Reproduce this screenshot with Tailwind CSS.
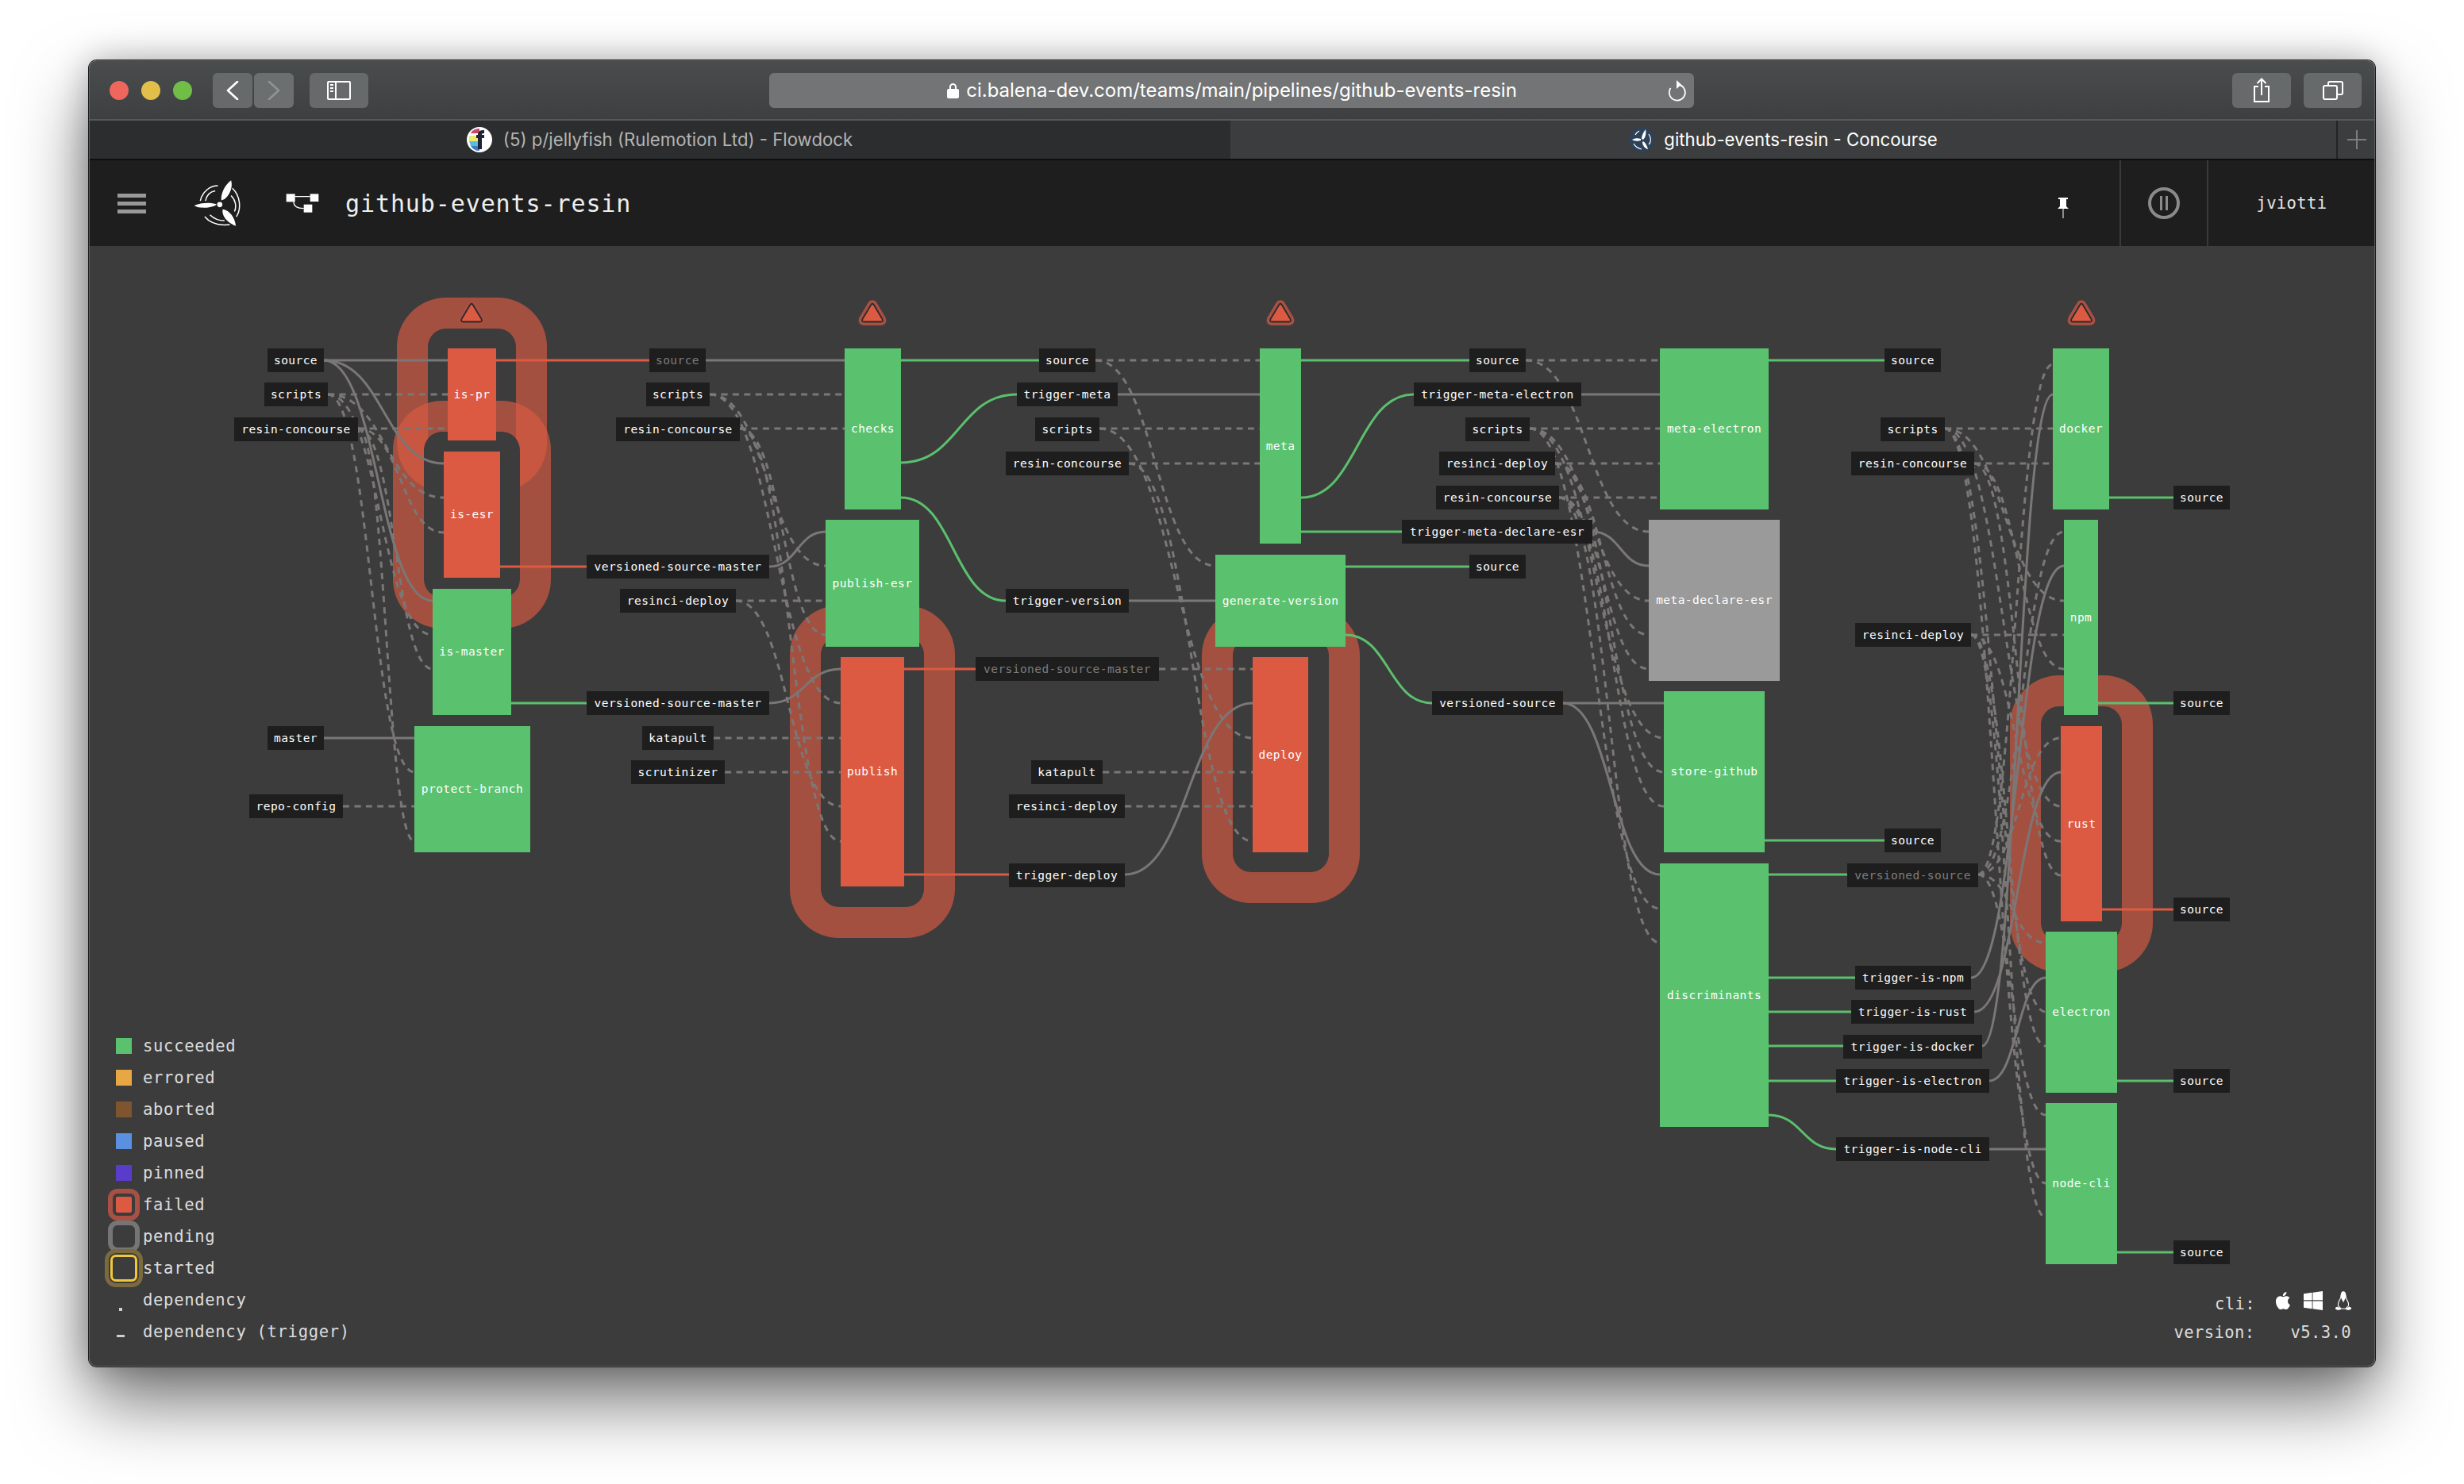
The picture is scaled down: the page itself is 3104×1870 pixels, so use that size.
<!DOCTYPE html>
<html lang="en">
<head>
    <meta charset="UTF-8">
    <title>github-events-resin - Concourse</title>
    <script src="https://cdn.jsdelivr.net/npm/@tailwindcss/browser@4"></script>
</head>
<body class="relative w-[3104px] h-[1870px] bg-white overflow-hidden">
    <!-- Browser window -->
    <div class="ml-[112px] mt-[76px] w-[2880px] h-[1646px] flex flex-col rounded-[10px] overflow-hidden shadow-[0_0_0_1px_#1c1c1c,0_44px_90px_rgba(0,0,0,0.55),0_0_40px_rgba(0,0,0,0.25)]">
        <!-- Toolbar -->
        <div class="h-[76px] shrink-0 flex items-start pt-[16px] pl-[26px] bg-gradient-to-b from-[#4a4d4e] to-[#3d3f40] border-b-2 border-[#565859]">
            <div class="flex gap-4 mt-[10px]">
                <div class="w-6 h-6 rounded-full bg-[#ee665c]"></div>
                <div class="w-6 h-6 rounded-full bg-[#e2bf4b]"></div>
                <div class="w-6 h-6 rounded-full bg-[#70be47]"></div>
            </div>
            <div class="ml-[26px] w-[50px] h-11 rounded-md bg-[#676a6b] flex items-center justify-center">
                <svg class="w-[16px] h-[24px]" viewBox="0 0 16 24" fill="none" stroke="#fff" stroke-width="2.6" stroke-linecap="round" stroke-linejoin="round"><path d="M14 1 2 12l12 11"/></svg>
            </div>
            <div class="ml-[2px] w-[50px] h-11 rounded-md bg-[#6c6f70] flex items-center justify-center">
                <svg class="w-[16px] h-[24px]" viewBox="0 0 16 24" fill="none" stroke="#909394" stroke-width="2.6" stroke-linecap="round" stroke-linejoin="round"><path d="m2 1 12 11L2 23"/></svg>
            </div>
            <div class="ml-[20px] w-[74px] h-11 rounded-md bg-[#676a6b] flex items-center justify-center">
                <svg class="w-[30px] h-[24px]" viewBox="0 0 30 24" fill="none" stroke="#fff" stroke-width="2"><rect x="1" y="1" width="28" height="22" rx="1"/><path d="M11 1v22M4 5h4M4 9h4M4 13h4"/></svg>
            </div>
            <div class="relative ml-[505px] w-[1165px] h-11 rounded-md bg-[#727475] flex items-center justify-center gap-[8px]">
                <svg class="w-[17px] h-[22px]" viewBox="0 0 17 22" fill="#fff"><path d="M4 10V6.500a4.500 4.500 0 0 1 9 0V10h-2V6.500a2.500 2.500 0 0 0-5 0V10z"/><rect x="1" y="9" width="15" height="12" rx="2"/></svg>
                <span class="font-['Inter',sans-serif] text-[24px] text-white">ci.balena-dev.com/teams/main/pipelines/github-events-resin</span>
                <svg class="absolute right-[10px] top-[8px] w-[24px] h-[28px]" viewBox="0 0 24 28" fill="none" stroke="#fff" stroke-width="1.800"><path d="M13 6.500a10 10 0 1 1-8.500 4.500"/><path d="M12 1v11l6-5.500z" fill="#fff" stroke="none"/></svg>
            </div>
            <div class="ml-[678px] w-[74px] h-11 rounded-md bg-[#676a6b] flex items-center justify-center">
                <svg class="w-[24px] h-[32px]" viewBox="0 0 24 32" fill="none" stroke="#fff" stroke-width="2"><path d="M8 11H3v19h18V11h-5M12 22V2M6.500 7 12 1.500 17.500 7"/></svg>
            </div>
            <div class="ml-[16px] w-[73px] h-11 rounded-md bg-[#676a6b] flex items-center justify-center">
                <svg class="w-[26px] h-[24px]" viewBox="0 0 26 24" fill="none" stroke="#fff" stroke-width="2"><rect x="1" y="6" width="17" height="17" rx="2"/><path d="M7 5V3a2 2 0 0 1 2-2h14a2 2 0 0 1 2 2v12a2 2 0 0 1-2 2h-4"/></svg>
            </div>
        </div>

        <!-- Tab bar -->
        <div class="h-[50px] shrink-0 flex border-b-2 border-[#0e0e0e] font-['Inter',sans-serif] text-[22.2px]">
            <div class="w-[1438px] bg-[#2b2d2e] flex items-center justify-center gap-[14px] text-[#b4b4b4]">
                <svg class="w-[32px] h-[32px]" viewBox="0 0 32 32">
                    <circle cx="16" cy="16" r="16" fill="#fff"/>
                    <path d="M6 6a14 14 0 0 1 10-4v6H5z" fill="#c9466b"/>
                    <path d="M3 11h13v7H2.500z" fill="#e9e873"/>
                    <path d="M3 18h13v6H5z" fill="#5bbbe0"/>
                    <path d="M5 24h11v6a13 13 0 0 1-11-6z" fill="#3a7cc6"/>
                    <path d="M16 2a14 14 0 0 1 0 28z" fill="#fff"/>
                    <path d="M14 10c0-5 3-6 8-6v4c-2 0-3 0-3 2h3v4h-3v14h-5V14h-2v-4z" fill="#1e2436"/>
                </svg>
                <span>(5) p/jellyfish (Rulemotion Ltd) - Flowdock</span>
            </div>
            <div class="w-[1393px] bg-[#3b3d3e] flex items-center justify-center gap-[12px] text-white">
                <svg class="w-[32px] h-[32px]" viewBox="0 0 32 32">
                    <circle cx="16" cy="16" r="16" fill="#2d4159"/>
                    <path d="M16 15c0-4 2-8 5-12 1 5 0 10-3 13zM15 17c-4 1-8 1-11-1 3-2 8-2 11-1zM18 18c3 2 5 6 6 10-4-1-7-5-7-9z" fill="#fff"/>
                    <path d="M8 10c1-2 3-4 5-5M25 9c3 5 3 10 0 13M6 21c2 4 6 6 10 7" fill="none" stroke="#fff" stroke-width="1.200"/>
                </svg>
                <span>github-events-resin - Concourse</span>
            </div>
            <div class="flex-1 bg-[#3b3d3e] border-l-2 border-[#232425] flex items-center justify-center">
                <svg class="w-[24px] h-[24px]" viewBox="0 0 24 24" stroke="#7b7d7e" stroke-width="2"><path d="M12 0v24M0 12h24"/></svg>
            </div>
        </div>

        <!-- App header -->
        <div class="h-[108px] shrink-0 flex items-center bg-[#1e1e1e] font-['DejaVu_Sans_Mono',monospace]">
            <div class="ml-[36px] w-[36px] flex flex-col gap-[5px]">
                <div class="h-[5px] bg-[#999]"></div>
                <div class="h-[5px] bg-[#999]"></div>
                <div class="h-[5px] bg-[#999]"></div>
            </div>
            <!-- Windmill logo -->
            <svg class="ml-[59px] w-[63px] h-[63px]" viewBox="20 5 190 190">
                <path d="M165 12C140 30 125 65 128 88 150 85 175 45 165 12z" fill="#fff"/>
                <path d="M25 108C50 95 90 95 110 103 100 115 50 122 25 108z" fill="#fff"/>
                <path d="M133 122C160 125 180 155 183 185 155 175 128 150 133 122z" fill="#fff"/>
                <circle cx="122" cy="104" r="10" fill="#fff"/>
                <path d="M115 32C85 32 55 55 48 90M105 52C85 55 72 70 68 90M170 42C200 70 205 120 185 150M165 70C185 90 185 115 178 130M65 150C85 175 115 185 160 180M85 143C100 158 120 165 140 165" fill="none" stroke="#fff" stroke-width="4.500"/>
            </svg>
            <!-- Pipeline icon -->
            <svg class="ml-[53px] w-[44px] h-[26px]" viewBox="370 78 132 78" fill="#fff">
                <rect x="375" y="82" width="33" height="30"/>
                <rect x="465" y="82" width="32" height="29"/>
                <rect x="441" y="122" width="32" height="30"/>
                <path d="M408 92h57M403 112c0 16 10 25 38 25" fill="none" stroke="#fff" stroke-width="4"/>
            </svg>
            <div class="ml-[32px] mt-[2px] text-[30px] leading-none tracking-[0.9px] text-[#eee]">github-events-resin</div>
            <svg class="ml-auto mr-[63px] mt-[12px] w-[16px] h-[26px]" viewBox="0 0 16 26" fill="#fff">
                <path d="M2 0h12v2h-2v9l3 3H1l3-3V2H2z"/>
                <rect x="7.300" y="14" width="1.400" height="12" fill="#bbb"/>
            </svg>
            <div class="w-[110px] h-full border-l-2 border-[#3a3a3a] flex items-center justify-center">
                <div class="w-[40px] h-[40px] rounded-full border-[4px] border-[#8a8a8a] flex items-center justify-center gap-[4px]">
                    <div class="w-[3px] h-[18px] bg-[#8a8a8a]"></div>
                    <div class="w-[3px] h-[18px] bg-[#8a8a8a]"></div>
                </div>
            </div>
            <div class="w-[212px] h-full border-l-2 border-[#3a3a3a] flex items-center justify-center text-[20.5px] tracking-[0.4px] text-[#e4e4e4]">jviotti</div>
        </div>

        <!-- Canvas -->
        <div class="flex-1 bg-[#3c3c3c]"></div>
    </div>
    <!-- Lighter inner rim of the window -->
    <div class="absolute left-[112px] top-[76px] w-[2880px] h-[1646px] rounded-[10px] border border-[#6a6a6a]/80 pointer-events-none"></div>

    <!-- Pipeline graph: nodes of a diagram, placed by page coordinates -->
    <div class="font-['DejaVu_Sans_Mono',monospace] text-[14.5px] tracking-[0.44px] leading-none">
        <!-- Failure halos: the ring is translucent, the inside hides what lies below -->
        <div class="absolute left-[500px] top-[375px] w-[189px] h-[245px] rounded-[62px] border-[39px] border-[#dc5a42]/65 bg-[#3c3c3c] bg-clip-padding"></div>
        <div class="absolute left-[495px] top-[505px] w-[199px] h-[287px] rounded-[62px] border-[39px] border-[#dc5a42]/65 bg-[#3c3c3c] bg-clip-padding"></div>
        <div class="absolute left-[995px] top-[763px] w-[208px] h-[419px] rounded-[62px] border-[39px] border-[#dc5a42]/65 bg-[#3c3c3c] bg-clip-padding"></div>
        <div class="absolute left-[1514px] top-[764px] w-[199px] h-[374px] rounded-[62px] border-[39px] border-[#dc5a42]/65 bg-[#3c3c3c] bg-clip-padding"></div>
        <div class="absolute left-[2532px] top-[851px] w-[180px] h-[374px] rounded-[62px] border-[39px] border-[#dc5a42]/65 bg-[#3c3c3c] bg-clip-padding"></div>

        <!-- Edges -->
        <svg class="absolute left-0 top-0 w-[3104px] h-[1870px] fill-none" viewBox="0 0 3104 1870">
            <g id="edges-dep" class="stroke-[#7a7776] stroke-[3px] [stroke-dasharray:8_6.4]"></g>
            <g id="edges-trigger" class="stroke-[#7a7776] stroke-[3px]"></g>
            <g id="edges-ok" class="stroke-[#5bc06d] stroke-[3px]"></g>
            <g id="edges-fail" class="stroke-[#dc5a42] stroke-[3px]"></g>
        </svg>

        <!-- Alert triangles -->
        <svg class="absolute left-[575px] top-[377px] w-[38px] h-[34px]" viewBox="0 0 38 34"><path d="M17 7.500Q19 4 21 7.500L31.500 25Q33 28.500 29.500 28.500H8.500Q5 28.500 6.500 25Z" fill="#dc5a42" stroke="#a85043" stroke-width="9" stroke-linejoin="round"/><path d="M17 7.500Q19 4 21 7.500L31.500 25Q33 28.500 29.500 28.500H8.500Q5 28.500 6.500 25Z" fill="#dc5a42" stroke="#2a2a2a" stroke-width="1.800" stroke-linejoin="round"/></svg>
        <svg class="absolute left-[1080px] top-[377px] w-[38px] h-[34px]" viewBox="0 0 38 34"><path d="M17 7.500Q19 4 21 7.500L31.500 25Q33 28.500 29.500 28.500H8.500Q5 28.500 6.500 25Z" fill="#dc5a42" stroke="#a85043" stroke-width="9" stroke-linejoin="round"/><path d="M17 7.500Q19 4 21 7.500L31.500 25Q33 28.500 29.500 28.500H8.500Q5 28.500 6.500 25Z" fill="#dc5a42" stroke="#2a2a2a" stroke-width="1.800" stroke-linejoin="round"/></svg>
        <svg class="absolute left-[1594px] top-[377px] w-[38px] h-[34px]" viewBox="0 0 38 34"><path d="M17 7.500Q19 4 21 7.500L31.500 25Q33 28.500 29.500 28.500H8.500Q5 28.500 6.500 25Z" fill="#dc5a42" stroke="#a85043" stroke-width="9" stroke-linejoin="round"/><path d="M17 7.500Q19 4 21 7.500L31.500 25Q33 28.500 29.500 28.500H8.500Q5 28.500 6.500 25Z" fill="#dc5a42" stroke="#2a2a2a" stroke-width="1.800" stroke-linejoin="round"/></svg>
        <svg class="absolute left-[2603px] top-[377px] w-[38px] h-[34px]" viewBox="0 0 38 34"><path d="M17 7.500Q19 4 21 7.500L31.500 25Q33 28.500 29.500 28.500H8.500Q5 28.500 6.500 25Z" fill="#dc5a42" stroke="#a85043" stroke-width="9" stroke-linejoin="round"/><path d="M17 7.500Q19 4 21 7.500L31.500 25Q33 28.500 29.500 28.500H8.500Q5 28.500 6.500 25Z" fill="#dc5a42" stroke="#2a2a2a" stroke-width="1.800" stroke-linejoin="round"/></svg>

        <!-- Task nodes -->
        <div class="absolute left-[564px] top-[439px] w-[61px] h-[116px] flex items-center justify-center bg-[#dc5a42] text-white">is-pr</div>
        <div class="absolute left-[559px] top-[569px] w-[71px] h-[159px] flex items-center justify-center bg-[#dc5a42] text-white">is-esr</div>
        <div class="absolute left-[545px] top-[742px] w-[99px] h-[159px] flex items-center justify-center bg-[#5ac26e] text-white">is-master</div>
        <div class="absolute left-[522px] top-[915px] w-[146px] h-[159px] flex items-center justify-center bg-[#5ac26e] text-white">protect-branch</div>
        <div class="absolute left-[1064px] top-[439px] w-[71px] h-[203px] flex items-center justify-center bg-[#5ac26e] text-white">checks</div>
        <div class="absolute left-[1040px] top-[655px] w-[118px] h-[160px] flex items-center justify-center bg-[#5ac26e] text-white">publish-esr</div>
        <div class="absolute left-[1059px] top-[828px] w-[80px] h-[289px] flex items-center justify-center bg-[#dc5a42] text-white">publish</div>
        <div class="absolute left-[1587px] top-[439px] w-[52px] h-[246px] flex items-center justify-center bg-[#5ac26e] text-white">meta</div>
        <div class="absolute left-[1531px] top-[699px] w-[164px] h-[116px] flex items-center justify-center bg-[#5ac26e] text-white">generate-version</div>
        <div class="absolute left-[1578px] top-[828px] w-[70px] h-[246px] flex items-center justify-center bg-[#dc5a42] text-white">deploy</div>
        <div class="absolute left-[2091px] top-[439px] w-[137px] h-[203px] flex items-center justify-center bg-[#5ac26e] text-white">meta-electron</div>
        <div class="absolute left-[2077px] top-[655px] w-[165px] h-[203px] flex items-center justify-center bg-[#9a9a9a] text-white">meta-declare-esr</div>
        <div class="absolute left-[2096px] top-[871px] w-[127px] h-[203px] flex items-center justify-center bg-[#5ac26e] text-white">store-github</div>
        <div class="absolute left-[2091px] top-[1088px] w-[137px] h-[332px] flex items-center justify-center bg-[#5ac26e] text-white">discriminants</div>
        <div class="absolute left-[2586px] top-[439px] w-[71px] h-[203px] flex items-center justify-center bg-[#5ac26e] text-white">docker</div>
        <div class="absolute left-[2600px] top-[655px] w-[43px] h-[246px] flex items-center justify-center bg-[#5ac26e] text-white">npm</div>
        <div class="absolute left-[2596px] top-[915px] w-[52px] h-[246px] flex items-center justify-center bg-[#dc5a42] text-white">rust</div>
        <div class="absolute left-[2577px] top-[1174px] w-[90px] h-[203px] flex items-center justify-center bg-[#5ac26e] text-white">electron</div>
        <div class="absolute left-[2577px] top-[1390px] w-[90px] h-[203px] flex items-center justify-center bg-[#5ac26e] text-white">node-cli</div>

        <!-- Resource labels: column 1 -->
        <div class="absolute left-[337px] top-[439px] w-[71px] h-[30px] flex items-center justify-center bg-[#1e1e1e] text-white">source</div>
        <div class="absolute left-[333px] top-[482px] w-[80px] h-[30px] flex items-center justify-center bg-[#1e1e1e] text-white">scripts</div>
        <div class="absolute left-[295px] top-[526px] w-[156px] h-[30px] flex items-center justify-center bg-[#1e1e1e] text-white">resin-concourse</div>
        <div class="absolute left-[337px] top-[915px] w-[71px] h-[30px] flex items-center justify-center bg-[#1e1e1e] text-white">master</div>
        <div class="absolute left-[314px] top-[1001px] w-[118px] h-[30px] flex items-center justify-center bg-[#1e1e1e] text-white">repo-config</div>

        <!-- Column 2 -->
        <div class="absolute left-[818px] top-[439px] w-[71px] h-[30px] flex items-center justify-center bg-[#1e1e1e] text-[#7d7d7d]">source</div>
        <div class="absolute left-[814px] top-[482px] w-[80px] h-[30px] flex items-center justify-center bg-[#1e1e1e] text-white">scripts</div>
        <div class="absolute left-[776px] top-[526px] w-[156px] h-[30px] flex items-center justify-center bg-[#1e1e1e] text-white">resin-concourse</div>
        <div class="absolute left-[739px] top-[699px] w-[230px] h-[30px] flex items-center justify-center bg-[#1e1e1e] text-white">versioned-source-master</div>
        <div class="absolute left-[781px] top-[742px] w-[146px] h-[30px] flex items-center justify-center bg-[#1e1e1e] text-white">resinci-deploy</div>
        <div class="absolute left-[739px] top-[871px] w-[230px] h-[30px] flex items-center justify-center bg-[#1e1e1e] text-white">versioned-source-master</div>
        <div class="absolute left-[809px] top-[915px] w-[90px] h-[30px] flex items-center justify-center bg-[#1e1e1e] text-white">katapult</div>
        <div class="absolute left-[795px] top-[958px] w-[118px] h-[30px] flex items-center justify-center bg-[#1e1e1e] text-white">scrutinizer</div>

        <!-- Column 3 -->
        <div class="absolute left-[1309px] top-[439px] w-[71px] h-[30px] flex items-center justify-center bg-[#1e1e1e] text-white">source</div>
        <div class="absolute left-[1281px] top-[482px] w-[127px] h-[30px] flex items-center justify-center bg-[#1e1e1e] text-white">trigger-meta</div>
        <div class="absolute left-[1304px] top-[526px] w-[81px] h-[30px] flex items-center justify-center bg-[#1e1e1e] text-white">scripts</div>
        <div class="absolute left-[1267px] top-[569px] w-[155px] h-[30px] flex items-center justify-center bg-[#1e1e1e] text-white">resin-concourse</div>
        <div class="absolute left-[1267px] top-[742px] w-[155px] h-[30px] flex items-center justify-center bg-[#1e1e1e] text-white">trigger-version</div>
        <div class="absolute left-[1229px] top-[828px] w-[231px] h-[30px] flex items-center justify-center bg-[#1e1e1e] text-[#7d7d7d]">versioned-source-master</div>
        <div class="absolute left-[1299px] top-[958px] w-[90px] h-[30px] flex items-center justify-center bg-[#1e1e1e] text-white">katapult</div>
        <div class="absolute left-[1271px] top-[1001px] w-[146px] h-[30px] flex items-center justify-center bg-[#1e1e1e] text-white">resinci-deploy</div>
        <div class="absolute left-[1271px] top-[1088px] w-[146px] h-[30px] flex items-center justify-center bg-[#1e1e1e] text-white">trigger-deploy</div>

        <!-- Column 4 -->
        <div class="absolute left-[1851px] top-[439px] w-[71px] h-[30px] flex items-center justify-center bg-[#1e1e1e] text-white">source</div>
        <div class="absolute left-[1781px] top-[482px] w-[211px] h-[30px] flex items-center justify-center bg-[#1e1e1e] text-white">trigger-meta-electron</div>
        <div class="absolute left-[1846px] top-[526px] w-[81px] h-[30px] flex items-center justify-center bg-[#1e1e1e] text-white">scripts</div>
        <div class="absolute left-[1813px] top-[569px] w-[146px] h-[30px] flex items-center justify-center bg-[#1e1e1e] text-white">resinci-deploy</div>
        <div class="absolute left-[1809px] top-[612px] w-[155px] h-[30px] flex items-center justify-center bg-[#1e1e1e] text-white">resin-concourse</div>
        <div class="absolute left-[1766px] top-[655px] w-[240px] h-[30px] flex items-center justify-center bg-[#1e1e1e] text-white">trigger-meta-declare-esr</div>
        <div class="absolute left-[1851px] top-[699px] w-[71px] h-[30px] flex items-center justify-center bg-[#1e1e1e] text-white">source</div>
        <div class="absolute left-[1804px] top-[871px] w-[165px] h-[30px] flex items-center justify-center bg-[#1e1e1e] text-white">versioned-source</div>

        <!-- Column 5 -->
        <div class="absolute left-[2374px] top-[439px] w-[71px] h-[30px] flex items-center justify-center bg-[#1e1e1e] text-white">source</div>
        <div class="absolute left-[2369px] top-[526px] w-[81px] h-[30px] flex items-center justify-center bg-[#1e1e1e] text-white">scripts</div>
        <div class="absolute left-[2332px] top-[569px] w-[155px] h-[30px] flex items-center justify-center bg-[#1e1e1e] text-white">resin-concourse</div>
        <div class="absolute left-[2337px] top-[785px] w-[146px] h-[30px] flex items-center justify-center bg-[#1e1e1e] text-white">resinci-deploy</div>
        <div class="absolute left-[2374px] top-[1044px] w-[71px] h-[30px] flex items-center justify-center bg-[#1e1e1e] text-white">source</div>
        <div class="absolute left-[2327px] top-[1088px] w-[165px] h-[30px] flex items-center justify-center bg-[#1e1e1e] text-[#7d7d7d]">versioned-source</div>
        <div class="absolute left-[2337px] top-[1217px] w-[146px] h-[30px] flex items-center justify-center bg-[#1e1e1e] text-white">trigger-is-npm</div>
        <div class="absolute left-[2332px] top-[1260px] w-[155px] h-[30px] flex items-center justify-center bg-[#1e1e1e] text-white">trigger-is-rust</div>
        <div class="absolute left-[2322px] top-[1304px] w-[175px] h-[30px] flex items-center justify-center bg-[#1e1e1e] text-white">trigger-is-docker</div>
        <div class="absolute left-[2313px] top-[1347px] w-[193px] h-[30px] flex items-center justify-center bg-[#1e1e1e] text-white">trigger-is-electron</div>
        <div class="absolute left-[2313px] top-[1433px] w-[193px] h-[30px] flex items-center justify-center bg-[#1e1e1e] text-white">trigger-is-node-cli</div>

        <!-- Column 6 -->
        <div class="absolute left-[2738px] top-[612px] w-[71px] h-[30px] flex items-center justify-center bg-[#1e1e1e] text-white">source</div>
        <div class="absolute left-[2738px] top-[871px] w-[71px] h-[30px] flex items-center justify-center bg-[#1e1e1e] text-white">source</div>
        <div class="absolute left-[2738px] top-[1131px] w-[71px] h-[30px] flex items-center justify-center bg-[#1e1e1e] text-white">source</div>
        <div class="absolute left-[2738px] top-[1347px] w-[71px] h-[30px] flex items-center justify-center bg-[#1e1e1e] text-white">source</div>
        <div class="absolute left-[2738px] top-[1563px] w-[71px] h-[30px] flex items-center justify-center bg-[#1e1e1e] text-white">source</div>
    </div>

    <!-- Legend -->
    <div class="absolute left-[146px] top-[1298px] font-['DejaVu_Sans_Mono',monospace] text-[20.5px] tracking-[0.7px] text-[#dcdcdc]">
        <div class="h-10 flex items-center gap-[14px]"><div class="w-5 h-5 bg-[#5ac26e]"></div>succeeded</div>
        <div class="h-10 flex items-center gap-[14px]"><div class="w-5 h-5 bg-[#e8a745]"></div>errored</div>
        <div class="h-10 flex items-center gap-[14px]"><div class="w-5 h-5 bg-[#7f5530]"></div>aborted</div>
        <div class="h-10 flex items-center gap-[14px]"><div class="w-5 h-5 bg-[#5b90e0]"></div>paused</div>
        <div class="h-10 flex items-center gap-[14px]"><div class="w-5 h-5 bg-[#5a3ccd]"></div>pinned</div>
        <div class="h-10 flex items-center gap-[14px]"><div class="relative w-5 h-5 rounded-[2px] bg-[#dc5a42]"><div class="absolute -inset-[10px] rounded-[12px] border-[6px] border-[#a85043]"></div></div>failed</div>
        <div class="h-10 flex items-center gap-[14px]"><div class="relative w-5 h-5"><div class="absolute -inset-[10px] rounded-[12px] border-[6px] border-[#757575]"></div></div>pending</div>
        <div class="h-10 flex items-center gap-[14px]"><div class="relative w-5 h-5"><div class="absolute -inset-[7px] rounded-[7px] border-[3px] border-[#f0c63a]"></div><div class="absolute -inset-[14px] rounded-[14px] border-[5px] border-[#7a6a3d]"></div></div>started</div>
        <div class="h-10 flex items-center gap-[14px]"><div class="relative w-5 h-5"><div class="absolute left-[4px] top-[20px] w-[4px] h-[4px] bg-[#cfcfcf]"></div></div>dependency</div>
        <div class="h-10 flex items-center gap-[14px]"><div class="relative w-5 h-5"><div class="absolute left-[1px] top-[14px] w-[10px] h-[3px] bg-[#cfcfcf]"></div></div>dependency (trigger)</div>
    </div>

    <!-- CLI downloads and version -->
    <div class="absolute right-[142px] top-[1625px] font-['DejaVu_Sans_Mono',monospace] text-[20.5px] tracking-[0.4px] text-[#dcdcdc]">
        <div class="h-[36px] flex items-center justify-end">
            <span class="mr-[25px]">cli:</span>
            <svg class="w-[20px] h-[24px] -mt-[8px]" viewBox="3 1.500 18 21" fill="#fff"><path d="M18.710 19.500c-.83 1.240-1.710 2.450-3.050 2.470-1.340.03-1.770-.79-3.290-.79-1.530 0-2 .77-3.270.82-1.310.05-2.300-1.320-3.140-2.530C4.250 17 2.940 12.450 4.700 9.390c.87-1.520 2.430-2.480 4.120-2.510 1.280-.02 2.500.87 3.290.87.78 0 2.260-1.070 3.810-.91.65.03 2.470.26 3.640 1.980-.09.06-2.170 1.280-2.150 3.810.03 3.020 2.650 4.030 2.680 4.040-.03.07-.42 1.440-1.380 2.830M13 3.500c.73-.83 1.940-1.460 2.940-1.500.13 1.170-.34 2.350-1.040 3.190-.69.85-1.830 1.510-2.950 1.420-.15-1.150.41-2.350 1.050-3.110z"/></svg>
            <svg class="ml-[16px] w-[24px] h-[24px] -mt-[8px]" viewBox="0 0 24 24" fill="#fff"><path d="M0 3.300 10.600 1.800v9.400H0zM11.500 1.700 24 0v11.200H11.500zM0 12.500h10.600v9.700L0 20.700zM11.500 12.500H24V24l-12.500-1.700z"/></svg>
            <svg class="ml-[16px] w-[20px] h-[24px] -mt-[8px]" viewBox="0 0 20 24" fill="none" stroke="#fff" stroke-width="1.100"><path d="M7 7c0-8 6-8 6 0 0 2 2 4 3 7s1 5-1 6l-2 2H7l-2-2c-2-1-2-3-1-6s3-5 3-7z"/><path d="M3 20c-2 1-3 1-2.500 2S5 24 7 22M17 20c2 1 3 1 2.500 2S15 24 13 22" fill="#fff"/><path d="M8 2c1-1.500 3-1.500 4 0l1 5-3 6-3-6z" fill="#fff"/></svg>
        </div>
        <div class="h-[36px] flex items-center justify-end">
            <span class="mr-[45px]">version:</span>
            <span>v5.3.0</span>
        </div>
    </div>

    <script>
        // [x1, y1, x2, y2]: from a label or node edge to the next one
        const edges = {
            "edges-ok": [
                [644,886,739,886],[1135,454,1309,454],[1135,583,1281,497],[1135,627,1267,757],
                [1639,454,1851,454],[1639,627,1781,497],[1639,670,1766,670],[1695,714,1851,714],[1695,800,1804,886],
                [2228,454,2374,454],[2223,1059,2374,1059],[2228,1102,2327,1102],[2228,1232,2337,1232],[2228,1275,2332,1275],
                [2228,1318,2322,1318],[2228,1362,2313,1362],[2228,1405,2313,1448],
                [2657,627,2738,627],[2643,886,2738,886],[2667,1362,2738,1362],[2667,1578,2738,1578]
            ],
            "edges-fail": [
                [625,454,818,454],[630,714,739,714],[1139,843,1229,843],[1139,1102,1271,1102],[2648,1146,2738,1146]
            ],
            "edges-trigger": [
                [408,454,564,454],[408,454,559,584],[408,454,545,757],[408,930,522,930],
                [889,454,1064,454],[969,714,1040,670],[969,886,1059,843],
                [1408,497,1587,497],[1422,757,1531,757],[1417,1102,1578,886],
                [1992,497,2091,497],[2006,670,2077,713],[1969,886,2096,886],[1969,886,2091,1102],
                [2497,1318,2586,497],[2483,1232,2600,713],[2487,1275,2596,973],[2506,1362,2577,1232],[2506,1448,2577,1448]
            ],
            "edges-dep": [
                [413,497,564,497],[451,540,564,540],[413,497,559,627],[451,540,559,671],[413,497,545,800],[451,540,545,843],
                [413,497,522,973],[432,1016,522,1016],[451,540,522,1060],
                [894,497,1064,497],[932,540,1064,540],[894,497,1040,713],[927,757,1040,757],[932,540,1040,800],
                [894,497,1059,886],[899,930,1059,930],[913,973,1059,973],[927,757,1059,1016],[932,540,1059,1060],
                [1380,454,1587,454],[1385,540,1587,540],[1422,584,1587,584],[1380,454,1531,713],
                [1460,843,1578,843],[1385,540,1578,930],[1389,973,1578,973],[1417,1016,1578,1016],[1422,584,1578,1060],
                [1922,454,2091,454],[1927,540,2091,540],[1959,584,2091,584],[1964,627,2091,627],
                [1922,454,2077,670],[1927,540,2077,757],[1959,584,2077,800],[1964,627,2077,843],
                [1927,540,2096,930],[1959,584,2096,973],[1964,627,2096,1016],[1927,540,2091,1145],[1964,627,2091,1188],
                [2492,1102,2586,459],[2450,540,2586,540],[2487,584,2586,584],
                [2492,1102,2600,670],[2450,540,2600,757],[2483,800,2600,800],[2487,584,2600,843],
                [2492,1102,2596,930],[2450,540,2596,1016],[2483,800,2596,1060],[2487,584,2596,1103],
                [2492,1102,2577,1188],[2450,540,2577,1275],[2483,800,2577,1318],
                [2492,1102,2577,1405],[2450,540,2577,1491],[2483,800,2577,1534]
            ]
        };

        for (const id in edges) {
            const group = document.getElementById(id);
            edges[id].forEach(([x1, y1, x2, y2]) => {
                const dx = (x2 - x1) / 2;
                const path = document.createElementNS("http://www.w3.org/2000/svg", "path");
                path.setAttribute("d", `M${x1} ${y1}C${x1 + dx} ${y1} ${x2 - dx} ${y2} ${x2} ${y2}`);
                group.appendChild(path);
            });
        }
    </script>
</body>
</html>
